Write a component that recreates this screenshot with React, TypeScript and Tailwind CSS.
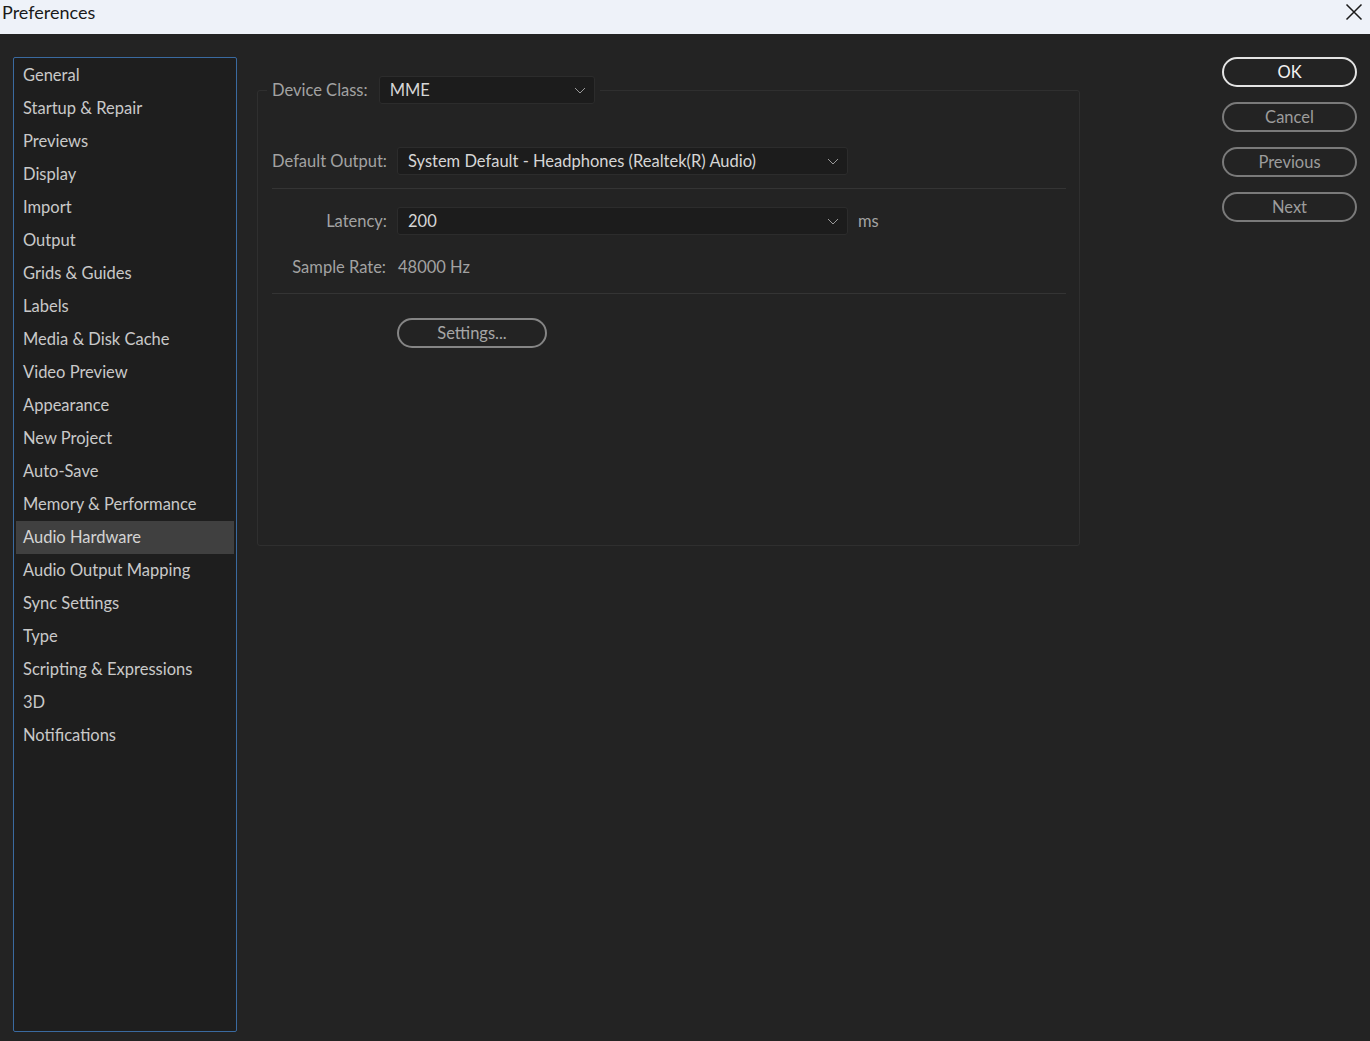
import React from "react";

const FONT = { fontFamily: "Lato, 'Noto Sans', sans-serif" };

const NAV = [
  "General",
  "Startup & Repair",
  "Previews",
  "Display",
  "Import",
  "Output",
  "Grids & Guides",
  "Labels",
  "Media & Disk Cache",
  "Video Preview",
  "Appearance",
  "New Project",
  "Auto-Save",
  "Memory & Performance",
  "Audio Hardware",
  "Audio Output Mapping",
  "Sync Settings",
  "Type",
  "Scripting & Expressions",
  "3D",
  "Notifications",
];

const Chevron = () => (
  <svg width="12" height="7" viewBox="0 0 12 7" className="shrink-0">
    <polyline points="1,1 6,6 11,1" fill="none" stroke="#9a9a9a" strokeWidth="1" />
  </svg>
);

const Dropdown = ({ value, width, padLeft = 10 }: { value: string; width: string; padLeft?: number }) => (
  <div
    className={`${width} h-[28px] bg-[#1c1c1c] border border-[#2c2c2c] rounded-[3px] flex items-center justify-between pr-[8px] text-[16.5px] text-[#d6d6d6] whitespace-nowrap`}
    style={{ paddingLeft: padLeft }}
  >
    <span>{value}</span>
    <Chevron />
  </div>
);

const PillButton = ({ label, primary }: { label: string; primary?: boolean }) => (
  <div
    className={`h-[30px] w-[135px] rounded-full border-2 flex items-center justify-center text-[16.5px] ${
      primary ? "border-[#e4e4e4] text-[#f2f2f2]" : "border-[#7a7a7a] text-[#9c9c9c]"
    }`}
  >
    {label}
  </div>
);

export default function App() {
  return (
    <div className="w-[1370px] h-[1041px] flex flex-col overflow-hidden" style={FONT}>
      {/* title bar */}
      <div className="h-[34px] bg-[#eef2f9] flex items-center justify-between pl-[2px] pr-[7px]">
        <span className="text-[18px] text-[#1a1a1a] leading-none -mt-[10px]">Preferences</span>
        <svg width="18" height="18" viewBox="0 0 18 18" className="-mt-[10px]">
          <path d="M1.5 1.5 L16.5 16.5 M16.5 1.5 L1.5 16.5" stroke="#1a1a1a" strokeWidth="1.5" />
        </svg>
      </div>

      {/* body */}
      <div className="flex-1 bg-[#232323] flex pl-[13px]">
        {/* sidebar */}
        <div className="mt-[23px] w-[224px] h-[975px] border border-[#3a6aa0] rounded-[2px] bg-[#1e1e1e] px-[2px] pt-px">
          {NAV.map((item) => (
            <div
              key={item}
              className={`h-[33px] pl-[7px] flex items-center text-[16.5px] whitespace-nowrap ${
                item === "Audio Hardware" ? "bg-[#404040] text-[#d4d4d4]" : "text-[#c9c9c9]"
              }`}
            >
              {item}
            </div>
          ))}
        </div>

        {/* main group */}
        <fieldset className="ml-[20px] mt-[42px] w-[823px] h-[470px] border border-[#2f2f2f] rounded-[3px] pl-[14px] pr-[13px]">
          <legend className="-ml-[5px] px-[5px]">
            <div className="flex items-center gap-[11px] whitespace-nowrap">
              <span className="text-[16.5px] text-[#a2a2a2]">Device Class:</span>
              <Dropdown value="MME" width="w-[216px]" padLeft={10} />
            </div>
          </legend>

          <div className="mt-[43px] flex items-center whitespace-nowrap">
            <span className="w-[115px] text-right text-[16.5px] text-[#a2a2a2]">Default Output:</span>
            <div className="ml-[10px]">
              <Dropdown value="System Default - Headphones (Realtek(R) Audio)" width="w-[451px]" />
            </div>
          </div>

          <div className="mt-[13px] h-px bg-[#343434]" />

          <div className="mt-[18px] flex items-center whitespace-nowrap">
            <span className="w-[115px] text-right text-[16.5px] text-[#a2a2a2]">Latency:</span>
            <div className="ml-[10px]">
              <Dropdown value="200" width="w-[451px]" />
            </div>
            <span className="ml-[10px] text-[16.5px] text-[#a2a2a2]">ms</span>
          </div>

          <div className="mt-[18px] h-[28px] flex items-center whitespace-nowrap">
            <span className="w-[114px] text-right text-[16.5px] text-[#a2a2a2]">Sample Rate:</span>
            <span className="ml-[12px] text-[16.5px] text-[#a2a2a2]">48000 Hz</span>
          </div>

          <div className="mt-[12px] h-px bg-[#343434]" />

          <div className="mt-[24px] pl-[125px]">
            <div className="w-[150px] h-[30px] rounded-full border-2 border-[#858585] flex items-center justify-center text-[16.5px] text-[#a6a6a6]">
              Settings...
            </div>
          </div>
        </fieldset>

        <div className="flex-1" />

        {/* action buttons */}
        <div className="mt-[23px] mr-[13px] flex flex-col gap-[15px]">
          <PillButton label="OK" primary />
          <PillButton label="Cancel" />
          <PillButton label="Previous" />
          <PillButton label="Next" />
        </div>
      </div>
    </div>
  );
}
